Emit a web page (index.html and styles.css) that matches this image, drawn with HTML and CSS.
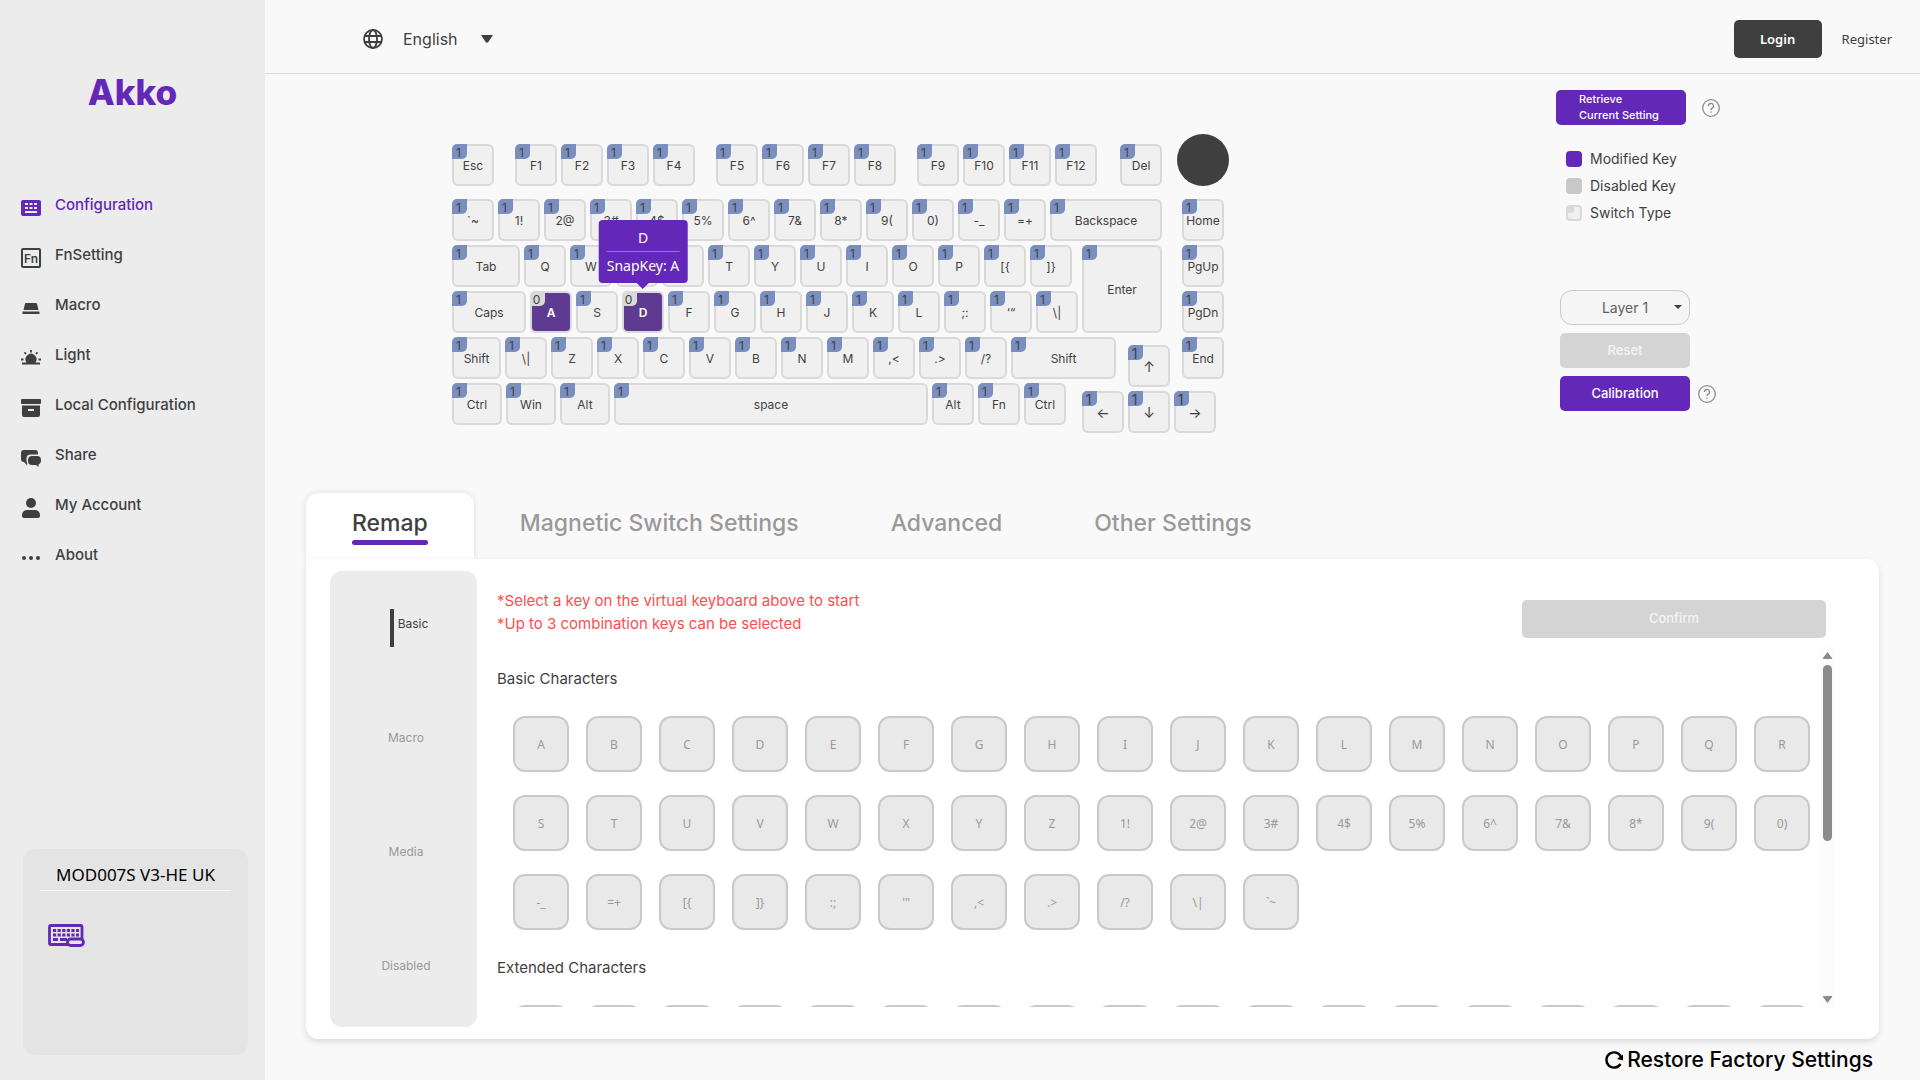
FILE: index.html
```html
<!DOCTYPE html>
<html lang="en">
<head>
    <meta charset="UTF-8">
    <meta name="viewport" content="width=device-width, initial-scale=1.0">
    <title>Akko Configuration</title>
    <link rel="stylesheet" href="styles.css">
</head>
<body>
    <aside class="sidebar">
        <a class="logo" href="#">Akko</a>
        <nav class="menu">
            <a class="menu-item active" href="#">
                <svg viewBox="0 0 20 20"><path fill-rule="evenodd" d="M2 2h16a2 2 0 0 1 2 2v12a2 2 0 0 1-2 2H2a2 2 0 0 1-2-2V4a2 2 0 0 1 2-2zM4 5v2h3V5zM8.500 5v2h3V5zM13 5v2h3V5zM4 9v2h3V9zM8.500 9v2h3V9zM13 9v2h3V9zM4 13v2h12v-2z"/></svg>
                <span>Configuration</span>
            </a>
            <a class="menu-item" href="#">
                <svg viewBox="0 0 20 20"><rect x="1" y="1" width="18" height="18" rx="1" fill="none" stroke="currentColor" stroke-width="2"/><text x="10" y="14.500" text-anchor="middle" class="fn-text">Fn</text></svg>
                <span>FnSetting</span>
            </a>
            <a class="menu-item" href="#">
                <svg viewBox="0 0 20 20"><path d="M5 5h10a1 1 0 0 1 1 .8L17.500 12h-15L4 5.800A1 1 0 0 1 5 5zM1.500 13.500h17V16h-17z"/></svg>
                <span>Macro</span>
            </a>
            <a class="menu-item" href="#">
                <svg viewBox="0 0 20 20"><path d="M5.500 14.500a5.500 5.500 0 1 1 9 0H19V16.500H1v-2z"/><path d="M10 2v2.500M3.500 4.400l1.500 1.600M16.500 4.400l-1.500 1.600M0 11.500h2.500M17.500 11.500H20" fill="none" stroke="currentColor" stroke-width="1.800"/></svg>
                <span>Light</span>
            </a>
            <a class="menu-item" href="#">
                <svg viewBox="0 0 20 20"><path fill-rule="evenodd" d="M1 1h18a1 1 0 0 1 1 1v3a1 1 0 0 1-1 1H1a1 1 0 0 1-1-1V2a1 1 0 0 1 1-1zM1 7.500h18V17a2 2 0 0 1-2 2H3a2 2 0 0 1-2-2zM7 11v2h6v-2z"/></svg>
                <span>Local Configuration</span>
            </a>
            <a class="menu-item" href="#">
                <svg viewBox="0 0 20 20"><path d="M3 2h11a3 3 0 0 1 3 3v1.500H9.500A4 4 0 0 0 5.500 10.500c0 2 0 3.500.7 4.500v2.500L3 14a3 3 0 0 1-3-3V5a3 3 0 0 1 3-3z"/><path d="M11 8h5a4 4 0 0 1 4 4v1a4 4 0 0 1-2.500 3.600V19l-2.500-2h-4a4 4 0 0 1-4-4v-1a4 4 0 0 1 4-4z"/></svg>
                <span>Share</span>
            </a>
            <a class="menu-item" href="#">
                <svg viewBox="0 0 20 20"><circle cx="10" cy="5" r="5"/><path d="M6 12h8a5 5 0 0 1 5 5v1a2 2 0 0 1-2 2H3a2 2 0 0 1-2-2v-1a5 5 0 0 1 5-5z"/></svg>
                <span>My Account</span>
            </a>
            <a class="menu-item" href="#">
                <svg viewBox="0 0 20 20"><circle cx="3" cy="10" r="2"/><circle cx="10" cy="10" r="2"/><circle cx="17" cy="10" r="2"/></svg>
                <span>About</span>
            </a>
        </nav>
        <div class="device">
            <div class="device-name">MOD007S V3-HE UK</div>
            <svg class="device-icon" viewBox="0 0 37 23"><rect x="1.500" y="1.500" width="32.500" height="19" rx="1.500" fill="none" stroke="currentColor" stroke-width="2.800"/><path d="M5 6.500h26M5 11h26" fill="none" stroke="currentColor" stroke-width="2.800" stroke-dasharray="3.200 1.400"/><path d="M5 15.500h5M12 15.500h7" fill="none" stroke="currentColor" stroke-width="2.800"/><rect x="19.500" y="15" width="16" height="6.500" rx="3.200" fill="#e4e4e4" stroke="currentColor" stroke-width="2.800"/></svg>
        </div>
    </aside>

    <main class="main">
        <header class="topbar">
            <div class="language">
                <svg class="globe" viewBox="0 0 20 20" fill="none" stroke="currentColor" stroke-width="1.800"><circle cx="10" cy="10" r="9"/><ellipse cx="10" cy="10" rx="4" ry="9"/><path d="M1.500 7h17M1.500 13h17"/></svg>
                <select class="language-select" aria-label="Language">
                    <option>English</option>
                </select>
                <svg class="caret" viewBox="0 0 12 8"><path d="M0 0h12L7 7.500H5z"/></svg>
            </div>
            <div class="auth">
                <button class="login">Login</button>
                <a class="register" href="#">Register</a>
            </div>
        </header>

        <section class="board">
            <div class="keyboard" id="keyboard">
                <!-- Key rows are built by the script below -->
            </div>

            <div class="controls">
                <div class="control-row">
                    <button class="btn retrieve">Retrieve<br>Current Setting</button>
                    <svg class="help" viewBox="0 0 18 18"><circle cx="9" cy="9" r="8.300"/><path d="M6.500 7a2.500 2.500 0 1 1 3.600 2.200C9.300 9.600 9 10 9 11M9 12.500v1.200"/></svg>
                </div>
                <ul class="legend">
                    <li><span class="swatch modified"></span>Modified Key</li>
                    <li><span class="swatch disabled"></span>Disabled Key</li>
                    <li><span class="swatch switch"></span>Switch Type</li>
                </ul>
                <div class="actions">
                    <div class="layer">
                        <select class="layer-select" aria-label="Layer">
                            <option>Layer 1</option>
                        </select>
                        <svg class="layer-caret" viewBox="0 0 8 4"><path d="M0 0h8L4 4z"/></svg>
                    </div>
                    <button class="btn" disabled>Reset</button>
                    <div class="control-row">
                        <button class="btn">Calibration</button>
                        <svg class="help" viewBox="0 0 18 18"><circle cx="9" cy="9" r="8.300"/><path d="M6.500 7a2.500 2.500 0 1 1 3.600 2.200C9.300 9.600 9 10 9 11M9 12.500v1.200"/></svg>
                    </div>
                </div>
            </div>
        </section>

        <section class="settings">
            <div class="tabs">
                <button class="tab active"><span>Remap</span></button>
                <button class="tab"><span>Magnetic Switch Settings</span></button>
                <button class="tab"><span>Advanced</span></button>
                <button class="tab"><span>Other Settings</span></button>
            </div>
            <div class="panel">
                <div class="categories">
                    <button class="category active"><span>Basic</span></button>
                    <button class="category"><span>Macro</span></button>
                    <button class="category"><span>Media</span></button>
                    <button class="category"><span>Disabled</span></button>
                </div>
                <div class="remap">
                    <div class="remap-head">
                        <p class="hint">*Select a key on the virtual keyboard above to start<br>*Up to 3 combination keys can be selected</p>
                        <button class="btn confirm" disabled>Confirm</button>
                    </div>
                    <div class="remap-body">
                        <div class="key-list" id="keyList">
                            <h3>Basic Characters</h3>
                            <div class="keys" id="basicKeys"></div>
                            <h3>Extended Characters</h3>
                            <div class="keys" id="extendedKeys"></div>
                        </div>
                        <div class="scrollbar">
                            <svg viewBox="0 0 9 7"><path d="M4.500 0L9 6v1H0V6z"/></svg>
                            <div class="track"><div class="thumb" id="thumb"></div></div>
                            <svg viewBox="0 0 9 7"><path d="M4.500 7L9 1V0H0v1z"/></svg>
                        </div>
                    </div>
                </div>
            </div>
        </section>

        <footer class="footer">
            <button class="restore">
                <svg viewBox="0 0 18 18"><path d="M15.500 13A7.600 7.600 0 1 1 16 6" fill="none" stroke="currentColor" stroke-width="2.400"/><path d="M18 3.500v6l-6-1.500z"/></svg>
                Restore Factory Settings
            </button>
        </footer>
    </main>

    <script>
        // each key: 'label' or ['label', 'extra classes']
        const fRow = ['Esc', ['F1', 'split'], 'F2', 'F3', 'F4', ['F5', 'split'], 'F6', 'F7', 'F8', ['F9', 'split'], 'F10', 'F11', 'F12', ['Del', 'split-del']];
        const numberRow = ['`~', '1!', '2@', '3#', '4$', '5%', '6^', '7&', '8*', '9(', '0)', '-_', '=+', ['Backspace', 'w-backspace'], ['Home', 'nav-key']];
        const tabRow = [['Tab', 'w-tab'], 'Q', 'W', 'E', 'R', 'T', 'Y', 'U', 'I', 'O', 'P', '[{', ']}'];
        const capsRow = [['Caps', 'w-caps'], ['A', 'modified'], 'S', ['D', 'modified tip'], 'F', 'G', 'H', 'J', 'K', 'L', ';:', '‘“', '\\|'];
        const shiftRow = [['Shift', 'w-lshift'], '\\|', 'Z', 'X', 'C', 'V', 'B', 'N', 'M', ',<', '.>', '/?', ['Shift', 'w-shift'], ['↑', 'arrow arrow-up'], ['End', 'end-key']];
        const ctrlRow = [['Ctrl', 'w-mod'], ['Win', 'w-mod'], ['Alt', 'w-mod'], ['space', 'w-space'], 'Alt', 'Fn', 'Ctrl', ['←', 'arrow arrow-left'], ['↓', 'arrow'], ['→', 'arrow']];

        function escapeText(text) {
            return text.replace(/&/g, '&amp;').replace(/</g, '&lt;');
        }

        function key(item) {
            const [label, extra] = Array.isArray(item) ? item : [item, ''];
            const type = extra.includes('modified') ? 0 : 1;
            const tip = extra.includes('tip')
                ? '<span class="tooltip"><span class="tooltip-title">D</span><span>SnapKey: A</span></span>'
                : '';
            return `<button class="key ${extra}"><span class="type">${type}</span>${escapeText(label)}${tip}</button>`;
        }

        function row(items) {
            return `<div class="row">${items.map(key).join('')}</div>`;
        }

        document.getElementById('keyboard').innerHTML = `
            <div class="row row-f">${fRow.map(key).join('')}<div class="knob"></div></div>
            ${row(numberRow)}
            <div class="row row-enter">
                <div class="stack">${row(tabRow)}${row(capsRow)}</div>
                ${key(['Enter', 'w-enter'])}
                <div class="stack nav-stack">${key('PgUp')}${key('PgDn')}</div>
            </div>
            ${row(shiftRow)}
            ${row(ctrlRow)}
        `;

        const basic = [...'ABCDEFGHIJKLMNOPQRSTUVWXYZ', '1!', '2@', '3#', '4$', '5%', '6^', '7&', '8*', '9(', '0)', '-_', '=+', '[{', ']}', ':;', '\'"', ',<', '.>', '/?', '\\|', '`~'];
        const extended = new Array(36).fill('');

        function fillKeys(id, labels) {
            document.getElementById(id).innerHTML = labels.map(l => `<button class="cap">${escapeText(l)}</button>`).join('');
        }
        fillKeys('basicKeys', basic);
        fillKeys('extendedKeys', extended);

        // keep the scroll thumb in step with the list
        const list = document.getElementById('keyList');
        const thumb = document.getElementById('thumb');
        list.addEventListener('scroll', () => {
            const room = thumb.parentElement.clientHeight - thumb.offsetHeight;
            thumb.style.marginTop = room * list.scrollTop / (list.scrollHeight - list.clientHeight) + 'px';
        });
    </script>
</body>
</html>
```

FILE: styles.css
```css
* {
    box-sizing: border-box;
}
body {
    font-family: 'Inter', sans-serif;
    font-size: 14px;
    color: #3f3f3f;
    margin: 0;
    min-height: 100vh;
    display: flex;
    background: #f9f9f9;
}
button, select {
    font-family: inherit;
    color: inherit;
    border: none;
    padding: 0;
    cursor: pointer;
}
a {
    color: inherit;
    text-decoration: none;
}
svg {
    fill: currentColor;
    flex-shrink: 0;
}

/* sidebar */
.sidebar {
    width: 265px;
    flex-shrink: 0;
    background: #ececec;
    display: flex;
    flex-direction: column;
}
.logo {
    margin-top: 68px;
    text-align: center;
    font-size: 35px;
    line-height: 48px;
    font-weight: 800;
    color: #6328b8;
}
.menu {
    margin-top: 76px;
    padding-left: 21px;
}
.menu-item {
    display: flex;
    align-items: flex-start;
    gap: 14px;
    height: 50px;
    font-size: 15px;
    line-height: 25px;
    font-weight: 500;
}
.menu-item svg {
    width: 20px;
    height: 32px;
}
.menu-item.active {
    color: #6328b8;
}
.fn-text {
    font-size: 12px;
    font-weight: 600;
}
.device {
    margin: auto 17px 25px 23px;
    height: 206px;
    padding: 10px 17px;
    border-radius: 12px;
    background: #e4e4e4;
}
.device-name {
    font-family: 'Noto Sans', sans-serif;
    font-size: 17px;
    line-height: 31px;
    text-align: center;
    color: #000;
    border-bottom: 1px solid #f5f5f5;
}
.device-icon {
    display: block;
    width: 37px;
    height: 23px;
    margin: 33px 0 0 8px;
    color: #6328b8;
}

/* top bar */
.main {
    flex: 1;
    min-width: 0;
    display: flex;
    flex-direction: column;
}
.topbar {
    height: 74px;
    padding: 4px 28px 0 98px;
    display: flex;
    align-items: center;
    justify-content: space-between;
    border-bottom: 1px solid #d9d9d9;
}
.language {
    display: flex;
    align-items: center;
    position: relative;
}
.globe {
    width: 20px;
    height: 20px;
    fill: none;
}
.language-select {
    appearance: none;
    background: none;
    margin-left: 20px;
    width: 90px;
    font-size: 16px;
    line-height: 24px;
}
.caret {
    position: absolute;
    right: 0;
    width: 12px;
    height: 8px;
    pointer-events: none;
}
.auth {
    display: flex;
    align-items: center;
    gap: 20px;
    font-family: 'Noto Sans', sans-serif;
}
.login {
    width: 88px;
    height: 38px;
    border-radius: 5px;
    background: #3f3f3f;
    color: #fff;
    font-size: 13px;
    font-weight: 600;
}
.register {
    font-size: 13px;
}

/* virtual keyboard */
.board {
    display: flex;
    justify-content: space-between;
    align-items: flex-start;
    padding: 16px 200px 0 187px;
    height: 419px;
}
.keyboard {
    padding-top: 54px;
    display: flex;
    flex-direction: column;
    gap: 4px;
}
.row {
    display: flex;
    gap: 4px;
    height: 42px;
}
.row-f {
    margin-bottom: 9px;
    align-items: flex-end;
}
.row-enter {
    height: 88px;
}
.stack {
    display: flex;
    flex-direction: column;
    gap: 4px;
    width: 626px;
}
.nav-stack {
    margin-left: 16px;
    width: 42px;
}
.key {
    position: relative;
    width: 42px;
    height: 42px;
    flex-shrink: 0;
    border: 2px solid #d9d9d9;
    border-radius: 6px;
    background: #f0f0f0;
    font-size: 12px;
    white-space: nowrap;
}
.type {
    position: absolute;
    top: -2px;
    left: -2px;
    width: 15px;
    height: 15px;
    line-height: 17px;
    padding-right: 2px;
    border-radius: 5px 0;
    background: #7a8fbf;
}
.split {
    margin-left: 17px;
}
.split-del {
    margin-left: 19px;
}
.nav-key {
    margin-left: 16px;
}
.end-key {
    margin-left: 8px;
}
.w-backspace { width: 112px; }
.w-tab { width: 68px; }
.w-caps { width: 74px; }
.w-mod { width: 50px; }
.w-lshift { width: 49px; }
.w-shift { width: 105px; }
.w-space { width: 314px; }
.w-enter {
    width: 80px;
    height: 88px;
}
.arrow {
    top: 8px;
    font-size: 14px;
}
.arrow-up {
    margin-left: 8px;
}
.arrow-left {
    margin-left: 12px;
}
.key.modified {
    background: #5f3a91;
    color: #fff;
    font-weight: 600;
}
.modified .type {
    background: #d9d9d9;
    color: #3f3f3f;
    font-weight: 400;
}
.knob {
    width: 52px;
    height: 52px;
    margin-left: 11px;
    border-radius: 50%;
    background: #3f3f3f;
}
.tooltip {
    position: absolute;
    z-index: 1;
    bottom: 48px;
    left: 50%;
    transform: translateX(-50%);
    padding: 4px 8px;
    border-radius: 4px;
    background: #6328b8;
    color: #fff;
    font-family: 'Noto Sans', sans-serif;
    font-size: 14px;
    font-weight: 400;
    line-height: 27px;
}
.tooltip::after {
    content: '';
    position: absolute;
    top: 100%;
    left: 50%;
    margin-left: -6px;
    border: 6px solid transparent;
    border-top-color: #6328b8;
}
.tooltip-title {
    display: block;
    border-bottom: 1px solid #9a72d4;
}

/* controls beside the keyboard */
.controls {
    width: 164px;
}
.control-row {
    display: flex;
    align-items: center;
}
.btn {
    width: 130px;
    height: 35px;
    padding-bottom: 2px;
    border-radius: 5px;
    background: #6328b8;
    color: #fff;
    font-size: 13px;
    font-weight: 500;
}
.btn:disabled {
    background: #d4d4d4;
    color: #f5f5f5;
    cursor: default;
}
.retrieve {
    padding-left: 23px;
    text-align: left;
    font-size: 11px;
    line-height: 16px;
}
.help {
    width: 18px;
    height: 18px;
    margin-left: 16px;
    fill: none;
    stroke: #8c8c8c;
    stroke-width: 1.3;
}
.actions .help {
    margin-left: 8px;
}
.legend {
    list-style: none;
    margin: 20px 0 0 10px;
    padding: 0;
    line-height: 27px;
}
.legend li {
    display: flex;
    align-items: center;
    gap: 8px;
}
.swatch {
    width: 16px;
    height: 16px;
    border-radius: 4px;
    background: #6328b8;
}
.swatch.disabled {
    background: #c9c9c9;
}
.swatch.switch {
    border: 2px solid #d9d9d9;
    background: #f0f0f0;
}
.swatch.switch::before {
    content: '';
    display: block;
    width: 6px;
    height: 6px;
    border-radius: 0 0 3px 0;
    background: #d9d9d9;
}
.actions {
    margin: 64px 0 0 4px;
    display: flex;
    flex-direction: column;
    gap: 8px;
}
.layer {
    position: relative;
    width: 130px;
}
.layer-select {
    appearance: none;
    display: block;
    width: 100%;
    height: 35px;
    border: 1px solid #c9c9c9;
    border-radius: 12px;
    background: #f5f5f5;
    color: #606060;
    font-size: 14px;
    text-align: center;
    text-align-last: center;
}
.layer-caret {
    position: absolute;
    top: 15px;
    right: 8px;
    width: 8px;
    height: 4px;
    pointer-events: none;
}

/* settings */
.settings {
    flex: 1;
    margin: 0 41px;
    display: flex;
    flex-direction: column;
}
.tabs {
    display: flex;
}
.tab {
    height: 66px;
    padding: 0 46px 2px;
    background: none;
    color: #999;
    font-size: 23px;
    font-weight: 500;
    line-height: 34px;
}
.tab span::after {
    content: '';
    display: block;
    height: 5px;
    border-radius: 3px;
}
.tab.active {
    background: #fff;
    color: #3f3f3f;
    border-radius: 12px 12px 0 0;
    box-shadow: 0 0 6px rgba(0, 0, 0, 0.12);
}
.tab.active span::after {
    background: #6328b8;
}
.panel {
    position: relative;
    flex: 1;
    display: flex;
    padding: 12px 44px 12px 24px;
    background: #fff;
    border-radius: 0 12px 12px 12px;
    box-shadow: 0 3px 6px rgba(0, 0, 0, 0.12);
}
.categories {
    width: 147px;
    height: 456px;
    display: flex;
    flex-direction: column;
    border-radius: 12px;
    background: #ececec;
}
.category {
    flex: 1;
    padding-left: 5px;
    background: none;
    color: #999;
    font-size: 12px;
}
.category span {
    display: inline-block;
    height: 38px;
    line-height: 30px;
}
.category.active {
    padding-left: 11px;
    color: #3f3f3f;
}
.category.active span {
    border-left: 4px solid #3f3f3f;
    padding-left: 4px;
}
.remap {
    flex: 1;
    min-width: 0;
    padding: 18px 0 0 20px;
}
.remap-head {
    display: flex;
    justify-content: space-between;
    align-items: flex-start;
    height: 58px;
    padding-right: 9px;
}
.hint {
    margin: 0;
    font-size: 15px;
    line-height: 23px;
    color: #ff4d4f;
}
.confirm {
    width: 304px;
    height: 38px;
    margin-top: 11px;
}
.remap-body {
    display: flex;
    height: 360px;
}
.key-list {
    flex: 1;
    overflow-y: scroll;
    scrollbar-width: none;
}
.key-list h3 {
    margin: 0;
    padding-top: 20px;
    font-size: 15px;
    font-weight: 400;
    line-height: 24px;
}
.keys {
    display: flex;
    flex-wrap: wrap;
    gap: 23px 17px;
    padding: 25px 0 6px 16px;
}
.cap {
    width: 56px;
    height: 56px;
    border: 2px solid #c9c9c9;
    border-radius: 12px;
    background: #e9e9e9;
    color: #999;
    font-family: 'Noto Sans', sans-serif;
    font-size: 12px;
}
.scrollbar {
    width: 15px;
    display: flex;
    flex-direction: column;
    align-items: center;
    gap: 6px;
    padding: 5px 0 4px;
    background: #fcfcfc;
    color: #8b8b8b;
}
.scrollbar svg {
    width: 9px;
    height: 7px;
}
.track {
    flex: 1;
}
.thumb {
    width: 9px;
    height: 54%;
    border-radius: 5px;
    background: #8b8b8b;
}

/* footer */
.footer {
    display: flex;
    justify-content: flex-end;
    padding: 5px 47px 4px;
}
.restore {
    display: flex;
    align-items: center;
    gap: 4px;
    background: none;
    color: #000;
    font-size: 21px;
    font-weight: 500;
    line-height: 32px;
}
.restore svg {
    width: 18px;
    height: 18px;
}
```
